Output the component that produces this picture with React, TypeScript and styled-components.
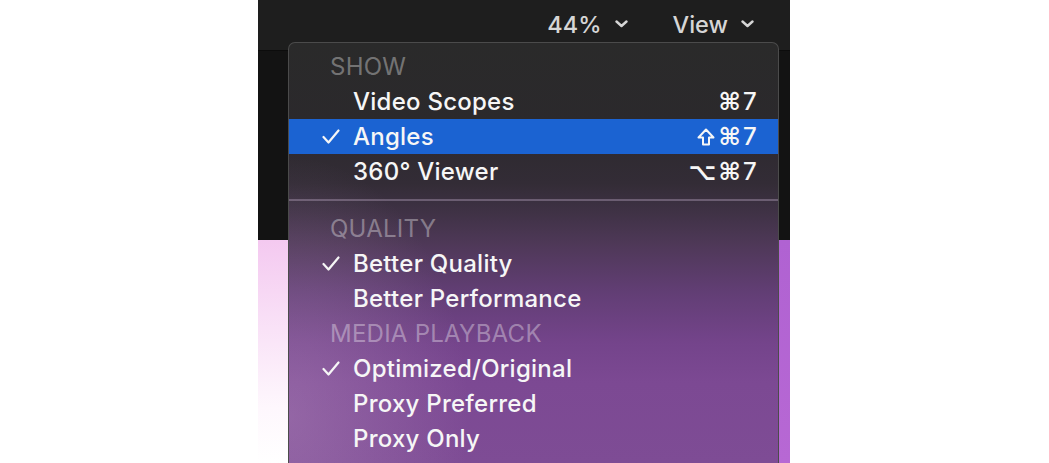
import styled, { createGlobalStyle } from "styled-components";

const GlobalStyle = createGlobalStyle`
  html, body {
    margin: 0;
    padding: 0;
    background: #ffffff;
  }
  body {
    font-family: "Inter", "DejaVu Sans", sans-serif;
  }
`;

const Page = styled.div`
  width: 1049px;
  height: 463px;
  overflow: hidden;
  background: #ffffff;
`;

const Frame = styled.div`
  position: relative;
  margin-left: 258px;
  width: 532px;
  height: 463px;
  display: flex;
  flex-direction: column;
  overflow: hidden;
  background: #141414;
`;

const TopBar = styled.div`
  height: 51px;
  flex-shrink: 0;
  display: flex;
  align-items: center;
  justify-content: flex-end;
  gap: 45px;
  padding-right: 36px;
  padding-bottom: 2px;
  box-sizing: border-box;
  background: #1e1e1e;
  border-bottom: 1px solid #0c0c0c;
`;

const BarButton = styled.div`
  display: flex;
  align-items: center;
  gap: 13px;
  color: #d6d6d6;
  font-size: 23.5px;
  font-weight: 500;
`;

const Stage = styled.div`
  height: 189px;
  flex-shrink: 0;
  background: #131313;
`;

const Viewer = styled.div`
  flex: 1;
  background:
    linear-gradient(to bottom, #f4c9f0 0%, #f9e2f7 40%, #fef7fd 75%, #ffffff 100%) 0 0 / 40px 100% no-repeat,
    linear-gradient(to bottom, #b062d2, #b768d4);
`;

const Menu = styled.div`
  position: absolute;
  left: 30px;
  top: 42px;
  width: 491px;
  height: 440px;
  box-sizing: border-box;
  padding-top: 6px;
  border: 1px solid #4b4b4b;
  border-bottom: none;
  border-radius: 7px 7px 0 0;
  background:
    radial-gradient(ellipse 180px 260px at 0% 85%, rgba(200, 165, 205, 0.3), rgba(200, 165, 205, 0) 100%),
    linear-gradient(
      to bottom,
      #2a2a2a 0px,
      #2b292c 80px,
      #332c36 140px,
      #3d3143 165px,
      #4e3857 200px,
      #623e75 250px,
      #74448b 300px,
      #7c4993 340px,
      #7e4c95 420px
    );
  color: #f4f4f4;
  font-size: 24px;
  font-weight: 500;
  letter-spacing: 0.25px;
`;

const Header = styled.div`
  height: 35px;
  display: flex;
  align-items: center;
  padding-left: 41px;
  color: rgba(255, 255, 255, 0.36);
  font-weight: 400;
`;

const Row = styled.div<{ $active?: boolean }>`
  height: 35px;
  display: flex;
  align-items: center;
  padding-right: 21px;
  background: ${({ $active }) => ($active ? "#1b63d2" : "transparent")};
  color: #f6f6f6;
`;

const CheckSlot = styled.div`
  width: 64px;
  flex-shrink: 0;
  display: flex;
  justify-content: flex-end;
  padding-right: 13px;
  box-sizing: border-box;
`;

const Label = styled.span`
  flex: 1;
`;

const Shortcut = styled.span`
  display: flex;
  align-items: center;
  gap: 2px;
`;

const KeySymbol = styled.span`
  font-family: "DejaVu Sans", sans-serif;
  font-weight: 700;
  font-size: 24px;
`;

const Separator = styled.div`
  height: 22px;
  display: flex;
  align-items: center;

  &:after {
    content: "";
    display: block;
    width: 100%;
    height: 2px;
    background: rgba(200, 180, 210, 0.35);
  }
`;

function Chevron() {
  return (
    <svg width="13" height="8" viewBox="0 0 13 8">
      <polyline
        points="1.5,1.5 6.5,6 11.5,1.5"
        fill="none"
        stroke="#d6d6d6"
        strokeWidth="2.4"
        strokeLinecap="round"
        strokeLinejoin="round"
      />
    </svg>
  );
}

function Check() {
  return (
    <svg width="18" height="15" viewBox="0 0 18 15">
      <path
        d="M1.5 8 L6.5 13.5 L16.5 1.5"
        fill="none"
        stroke="#f6f6f6"
        strokeWidth="2.2"
        strokeLinecap="round"
        strokeLinejoin="round"
      />
    </svg>
  );
}

function ShiftKey() {
  return (
    <svg width="18" height="18" viewBox="0 0 18 18" style={{ marginRight: 2 }}>
      <path
        d="M9 1.5 L16.5 9.5 H12 V16.5 H6 V9.5 H1.5 Z"
        fill="none"
        stroke="#f6f6f6"
        strokeWidth="2"
        strokeLinejoin="round"
      />
    </svg>
  );
}

type Item = {
  label: string;
  checked?: boolean;
  active?: boolean;
  keys?: string[];
};

const showItems: Item[] = [
  { label: "Video Scopes", keys: ["⌘"] },
  { label: "Angles", checked: true, active: true, keys: ["⇧", "⌘"] },
  { label: "360° Viewer", keys: ["⌥", "⌘"] },
];

const qualityItems: Item[] = [
  { label: "Better Quality", checked: true },
  { label: "Better Performance" },
];

const playbackItems: Item[] = [
  { label: "Optimized/Original", checked: true },
  { label: "Proxy Preferred" },
  { label: "Proxy Only" },
];

function MenuRow({ item }: { item: Item }) {
  return (
    <Row $active={item.active}>
      <CheckSlot>{item.checked && <Check />}</CheckSlot>
      <Label>{item.label}</Label>
      {item.keys && (
        <Shortcut>
          {item.keys.map((k) =>
            k === "⇧" ? <ShiftKey key={k} /> : <KeySymbol key={k}>{k}</KeySymbol>
          )}
          7
        </Shortcut>
      )}
    </Row>
  );
}

export default function App() {
  return (
    <Page>
      <GlobalStyle />
      <Frame>
        <TopBar>
          <BarButton>
            44%
            <Chevron />
          </BarButton>
          <BarButton>
            View
            <Chevron />
          </BarButton>
        </TopBar>
        <Stage />
        <Viewer />
        <Menu>
          <Header>SHOW</Header>
          {showItems.map((item) => (
            <MenuRow key={item.label} item={item} />
          ))}
          <Separator />
          <Header>QUALITY</Header>
          {qualityItems.map((item) => (
            <MenuRow key={item.label} item={item} />
          ))}
          <Header>MEDIA PLAYBACK</Header>
          {playbackItems.map((item) => (
            <MenuRow key={item.label} item={item} />
          ))}
        </Menu>
      </Frame>
    </Page>
  );
}
